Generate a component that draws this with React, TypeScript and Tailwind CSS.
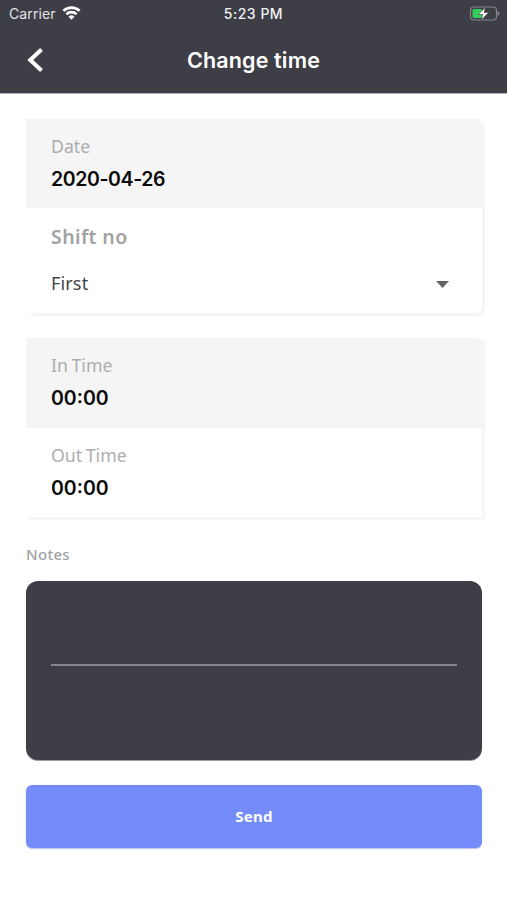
import React from 'react';

const StatusBar: React.FC = () => (
  <div className="grid h-[27px] grid-cols-3 items-center pl-[9px] pr-[7px] text-[14px] leading-none">
    <div className="flex items-center gap-[6px] text-[#e4e4e8]">
      <span className="tracking-[0.1px]">Carrier</span>
      <svg className="-mt-px" width="19" height="14" viewBox="0 0 19 14" fill="none" stroke="#fff" strokeWidth="2.7">
        <path d="M1.4 4.9a11.7 11.7 0 0 1 16.2 0" />
        <path d="M4.4 8.2a7.5 7.5 0 0 1 10.2 0" />
        <path d="M9.5 13.8 6.5 10.8a4.3 4.3 0 0 1 6 0z" fill="#fff" stroke="none" />
      </svg>
    </div>
    <span className="pr-[2px] text-center font-medium tracking-[0.5px] text-[#f1f1f4]">5:23 PM</span>
    <svg className="justify-self-end" width="31" height="15" viewBox="0 0 31 15">
      <rect x="1.5" y="1" width="26" height="13" rx="3.5" fill="none" stroke="#85858b" strokeWidth="1.2" />
      <path d="M28.5 5v5q2-.8 2-2.5t-2-2.5z" fill="#85858b" />
      <rect x="3.5" y="3" width="9.5" height="9" rx="1.5" fill="#33cf58" />
      <path d="M16.2 1.2 9.3 8.5h4.3l-1.2 5.6 7.3-7.7h-4.5z" fill="#fff" stroke="#3e3e46" strokeWidth=".6" />
    </svg>
  </div>
);

const Header: React.FC = () => (
  <header className="h-[93px] bg-[#3e3e46] font-['Inter',sans-serif] text-white shadow-[0_1px_0_#b4b4b8]">
    <StatusBar />
    <div className="grid h-[66px] grid-cols-[70px_1fr_70px] items-center">
      <button type="button" aria-label="Back" className="pl-[27px]">
        <svg width="17" height="26" viewBox="0 0 17 26" fill="none" stroke="#fff" strokeWidth="4">
          <path d="M14.5 2.5 3.2 13l11.3 10.5" />
        </svg>
      </button>
      <h1 className="text-center text-[21.5px] font-semibold tracking-[0.15px]">Change time</h1>
    </div>
  </header>
);

interface FieldProps {
  label: string;
  value: string;
  className?: string;
  valueClass?: string;
}

const Field: React.FC<FieldProps> = ({ label, value, className = '', valueClass = '' }) => (
  <div className={`flex flex-col pl-[25px] pt-[11px] ${className}`}>
    <span className="text-[17.7px] leading-[32px] text-[#adadad] [word-spacing:-1px]">{label}</span>
    <span className={`font-['Inter',sans-serif] text-[19.5px] font-semibold leading-[34px] text-[#0a0a0a] ${valueClass}`}>
      {value}
    </span>
  </div>
);

const App: React.FC = () => (
  <div className="flex min-h-[900px] w-full flex-col bg-white font-['Noto_Sans',sans-serif]">
    <Header />
    <main className="flex flex-col pl-[26px] pr-[25px] pt-[26px]">
      <section className="h-[194px] rounded-[6px] bg-white shadow-[3px_3px_2px_#f5f5f5]">
        <Field
          label="Date"
          value="2020-04-26"
          className="h-[89px] rounded-tr-[6px] bg-[#f5f5f5]"
          valueClass="tracking-[-0.4px]"
        />
        <div className="pl-[25px] pr-[33px] pt-[13px]">
          <p className="text-[19.5px] font-semibold leading-[32px] tracking-[0.4px] text-[#a2a2a2]">Shift no</p>
          <div className="mt-[14px] flex h-[32px] items-center justify-between text-[18px] tracking-[0.15px] text-[#444]">
            <span>First</span>
            <svg className="mt-[2px]" width="13" height="7" viewBox="0 0 13 7">
              <path d="M0 0h13L6.5 7z" fill="#636363" />
            </svg>
          </div>
        </div>
      </section>

      <section className="mt-[25px] h-[179px] bg-white shadow-[3px_3px_2px_#f5f5f5]">
        <Field label="In Time" value="00:00" className="h-[90px] rounded-tr-[6px] bg-[#f5f5f5]" />
        <Field label="Out Time" value="00:00" />
      </section>

      <label className="mt-[25px] text-[15px] font-medium leading-[24px] tracking-[0.3px] text-[#a2a2a2]">Notes</label>
      <div className="mt-[15px] h-[179px] rounded-[12px] bg-[#3e3e46] px-[25px] pt-[83px] shadow-[0_1px_0_#9c9ca0]">
        <div className="h-[2px] bg-[#85858b]" />
      </div>

      <button
        type="button"
        className="mt-[25px] h-[63px] rounded-[6px] bg-[#738cf9] pb-[1px] text-[15px] font-bold tracking-[0.2px] text-white shadow-[0_1px_1px_#b8c3ee]"
      >
        Send
      </button>
    </main>
  </div>
);

export default App;
